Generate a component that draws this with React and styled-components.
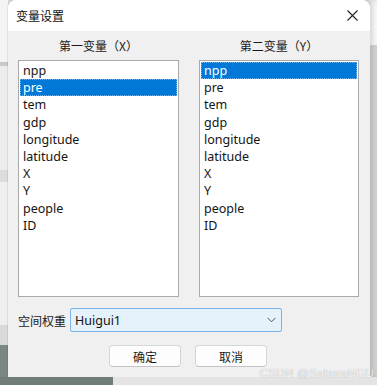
import React from 'react';
import styled, { createGlobalStyle } from 'styled-components';

const GlobalStyle = createGlobalStyle`
    html, body {
        margin: 0;
        padding: 0;
        background: #d6d6d6;
    }
    body {
        font-family: "Noto Sans", "Noto Sans CJK SC", sans-serif;
    }
`;

const Screen = styled.div`
    position: relative;
    width: 377px;
    height: 385px;
    overflow: hidden;
    display: grid;
    grid-template-columns: 8px 362px 7px;
    grid-template-rows: 377px 8px;
    background: #d4d4d4;
`;

const LeftStrip = styled.div`
    background: linear-gradient(
        to bottom,
        #f4f4f4 0px, #f4f4f4 62px,
        #c9c9c9 62px, #c9c9c9 66px,
        #ececec 66px, #ececec 170px,
        #dcdcdc 170px, #dcdcdc 182px,
        #efefef 182px, #efefef 325px,
        #d9d9d9 325px, #d9d9d9 345px,
        #7a8782 345px
    );
`;

const RightStrip = styled.div`
    background: linear-gradient(
        to bottom,
        #f7f7f7 0px, #f7f7f7 45px,
        #d2d2d2 45px
    );
    box-shadow: inset 3px 0 4px rgba(0, 0, 0, 0.12);
`;

const BottomStrip = styled.div`
    grid-column: 1 / 4;
    background: linear-gradient(
        to right,
        #6f7c77 0px, #6f7c77 113px,
        #e4e4e4 113px
    );
`;

const Dialog = styled.div`
    display: flex;
    flex-direction: column;
    background: #f0f0f0;
    border-radius: 8px 8px 0 0;
    overflow: hidden;
    box-shadow: 0 0 0 1px rgba(0, 0, 0, 0.08);
`;

const TitleBar = styled.div`
    height: 31px;
    flex: none;
    background: #ffffff;
    display: flex;
    align-items: center;
    justify-content: space-between;
    padding: 0 12px 0 8px;
    font-family: "Noto Sans CJK SC", sans-serif;
    font-size: 12px;
    color: #111;
`;

const CloseButton = styled.span`
    display: flex;
    align-items: center;
    justify-content: center;
    width: 12px;
    height: 12px;
`;

const Body = styled.div`
    flex: 1;
    display: flex;
    flex-direction: column;
    padding: 0 11px 10px 10px;
`;

const Columns = styled.div`
    display: grid;
    grid-template-columns: 161px 160px;
    column-gap: 20px;
`;

const Column = styled.div`
    display: flex;
    flex-direction: column;
`;

const ColumnLabel = styled.div`
    height: 29px;
    display: flex;
    align-items: center;
    justify-content: center;
    font-family: "Noto Sans CJK SC", sans-serif;
    font-size: 12px;
    color: #1a1a1a;
`;

const ListBox = styled.div`
    height: 237px;
    box-sizing: border-box;
    background: #ffffff;
    border: 1px solid #a9a9a9;
    padding: 1px;
`;

const ListItem = styled.div`
    height: 17.2px;
    line-height: 17px;
    padding-left: 3px;
    font-size: 12.5px;
    color: ${p => (p.$selected ? '#ffffff' : '#141414')};
    background: ${p => (p.$selected ? '#0078d7' : 'transparent')};
    outline: ${p => (p.$selected ? '1px dotted #6fb4ef' : 'none')};
    outline-offset: -1px;
`;

const WeightRow = styled.div`
    margin-top: 11px;
    display: flex;
    align-items: center;
    gap: 2px;
`;

const WeightLabel = styled.span`
    font-family: "Noto Sans CJK SC", sans-serif;
    font-size: 12px;
    color: #1a1a1a;
    width: 50px;
`;

const Combo = styled.div`
    width: 212px;
    height: 24px;
    box-sizing: border-box;
    border: 1px solid #7ab4e8;
    border-radius: 2px;
    background: #e5f1fb;
    display: flex;
    align-items: center;
    justify-content: space-between;
    padding: 0 5px 0 4px;
    font-size: 12.5px;
    color: #111;
`;

const ButtonRow = styled.div`
    margin-top: 13px;
    display: flex;
    gap: 14px;
    padding-left: 91px;
`;

const Button = styled.div`
    width: 72px;
    height: 22px;
    box-sizing: border-box;
    border: 1px solid #d6d6d6;
    border-bottom-color: #c4c4c4;
    border-radius: 4px;
    background: #fdfdfd;
    display: flex;
    align-items: center;
    justify-content: center;
    font-family: "Noto Sans CJK SC", sans-serif;
    font-size: 12px;
    color: #1a1a1a;
`;

const Watermark = styled.div`
    position: absolute;
    right: 3px;
    bottom: 6px;
    font-family: "Liberation Sans", sans-serif;
    font-size: 11.5px;
    color: rgba(255, 255, 255, 0.9);
    text-shadow: 0 0 1px rgba(110, 110, 110, 0.7);
    letter-spacing: 0.3px;
`;

const variables = ['npp', 'pre', 'tem', 'gdp', 'longitude', 'latitude', 'X', 'Y', 'people', 'ID'];

function VariableList({ selected }) {
    return (
        <ListBox>
            {variables.map(name => (
                <ListItem key={name} $selected={name === selected}>
                    {name}
                </ListItem>
            ))}
        </ListBox>
    );
}

export default function App() {
    return (
        <Screen>
            <GlobalStyle />
            <LeftStrip />
            <Dialog>
                <TitleBar>
                    <span>变量设置</span>
                    <CloseButton>
                        <svg width="11" height="11" viewBox="0 0 11 11">
                            <path d="M0.5 0.5L10.5 10.5M10.5 0.5L0.5 10.5" stroke="#222" strokeWidth="1.1" fill="none" />
                        </svg>
                    </CloseButton>
                </TitleBar>
                <Body>
                    <Columns>
                        <Column>
                            <ColumnLabel>第一变量（X）</ColumnLabel>
                            <VariableList selected="pre" />
                        </Column>
                        <Column>
                            <ColumnLabel>第二变量（Y）</ColumnLabel>
                            <VariableList selected="npp" />
                        </Column>
                    </Columns>
                    <WeightRow>
                        <WeightLabel>空间权重</WeightLabel>
                        <Combo>
                            <span>Huigui1</span>
                            <svg width="9" height="6" viewBox="0 0 9 6">
                                <path d="M0.5 0.8L4.5 4.8L8.5 0.8" stroke="#555" strokeWidth="1" fill="none" />
                            </svg>
                        </Combo>
                    </WeightRow>
                    <ButtonRow>
                        <Button>确定</Button>
                        <Button>取消</Button>
                    </ButtonRow>
                </Body>
            </Dialog>
            <RightStrip />
            <BottomStrip />
            <Watermark>CSDN @SakuraNGU</Watermark>
        </Screen>
    );
}
